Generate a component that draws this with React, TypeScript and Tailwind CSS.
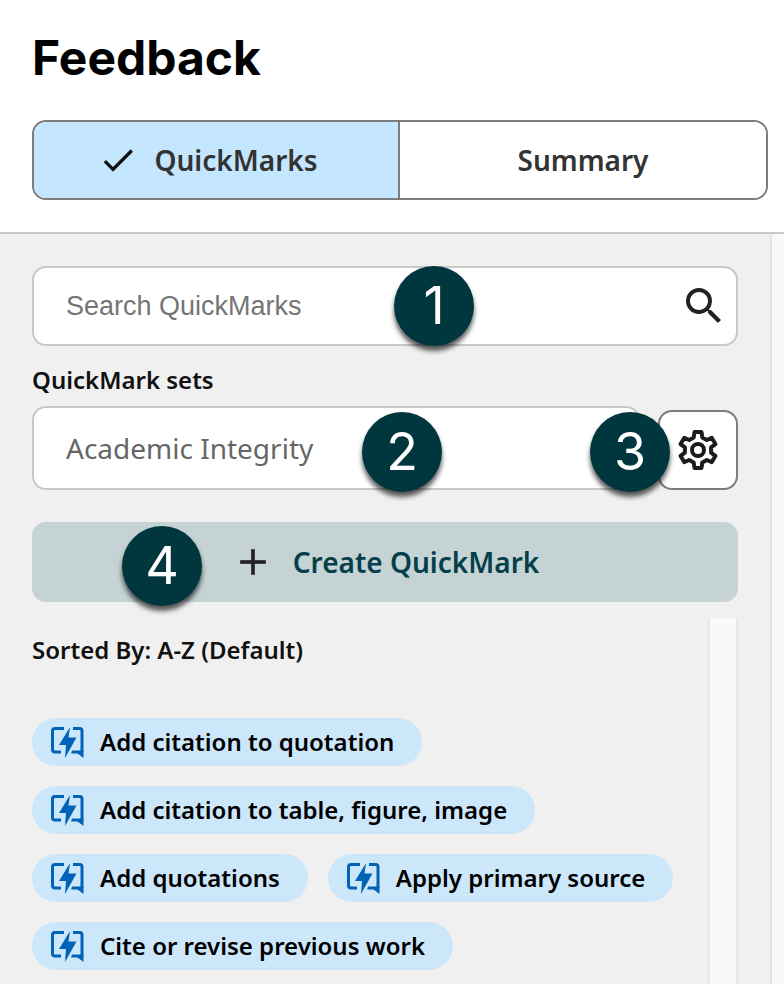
import type { ReactNode } from 'react';
import { Plus } from 'lucide-react';
import { MdCheck, MdSearch } from 'react-icons/md';

const quickMarks = [
  'Add citation to quotation',
  'Add citation to table, figure, image',
  'Add quotations',
  'Apply primary source',
  'Cite or revise previous work',
];

const QuickMarkIcon = () => (
  <svg viewBox="0 0 34 32" className="h-8 w-[34px] shrink-0" fill="none" aria-hidden="true">
    <path d="M14 2.5H5Q2.5 2.5 2.5 5V23.5Q2.5 26 5 26H11" stroke="#0063b8" strokeWidth="3" />
    <path d="M23 2.5H29.5Q32 2.5 32 5V26" stroke="#0063b8" strokeWidth="3" />
    <path d="M22 24.5H33.5V32L27.5 27.5H21Z" fill="#0063b8" />
    <path d="M20 1L18.5 11.5H26.5L15 32L16 19H9Z" fill="#0063b8" />
  </svg>
);

const GearIcon = () => (
  <svg
    viewBox="-20 -20 40 40"
    className="size-10"
    fill="none"
    stroke="#1c1c1c"
    strokeWidth="4"
    strokeLinejoin="round"
    aria-hidden="true"
  >
    <path d="M-4.3 -12.6L-3.5 -18H3.5L4.3 -12.6L8.8 -10L13.8 -12.1L17.4 -5.9L13.1 -2.6V2.6L17.4 5.9L13.8 12.1L8.8 10L4.3 12.6L3.5 18H-3.5L-4.3 12.6L-8.8 10L-13.8 12.1L-17.4 5.9L-13.1 2.6V-2.6L-17.4 -5.9L-13.8 -12.1L-8.8 -10Z" />
    <circle r="6" />
  </svg>
);

const Step = ({ className, children }: { className: string; children: ReactNode }) => (
  <span
    className={`absolute z-10 flex size-20 items-center justify-center rounded-full bg-[#00363e] font-['Inter',sans-serif] text-[52px] leading-none text-white shadow-[0_5px_5px_0_rgba(0,0,0,0.65)] ${className}`}
  >
    {children}
  </span>
);

const App = () => {
  return (
    <div className="flex min-h-screen flex-col bg-white font-['Noto_Sans',sans-serif] text-[#111]">
      <header className="border-b-2 border-[#c8c8c8] pt-8 pr-4 pb-8 pl-8">
        <h1 className="mb-9 font-['Inter',sans-serif] text-[48px] leading-[52px] font-bold text-black">Feedback</h1>
        <div className="grid h-20 grid-cols-2 overflow-hidden rounded-[14px] border-2 border-[#7c7c7c] text-[28px] font-semibold text-[#333]">
          <button
            type="button"
            className="flex items-center justify-center gap-4 border-r-2 border-[#7c7c7c] bg-[#c5e6ff] pr-4"
          >
            <MdCheck className="size-10 text-[#111]" />
            QuickMarks
          </button>
          <button type="button" className="bg-white">
            Summary
          </button>
        </div>
      </header>

      <div className="flex flex-1">
        <main className="flex flex-1 flex-col bg-[#f0f0f0] px-8 pt-8">
          <div className="relative">
            <input
              type="text"
              aria-label="Search QuickMarks"
              placeholder="Search QuickMarks"
              className="block h-20 w-full rounded-[14px] border-2 border-[#c8c8c8] bg-white pr-20 pl-8 font-['Liberation_Sans',sans-serif] text-[27px] placeholder:text-[#757575]"
            />
            <button type="button" aria-label="Search" className="absolute top-4 right-[10px] flex size-12 items-center justify-center">
              <MdSearch className="size-12 text-[#222]" />
            </button>
            <Step className="top-0 left-[362px]">1</Step>
          </div>

          <label htmlFor="quickmark-set" className="mt-4 mb-2 text-[24px] leading-9 font-semibold">
            QuickMark sets
          </label>
          <div className="relative flex items-end gap-[18px]">
            <select
              id="quickmark-set"
              className="h-[84px] min-w-0 flex-1 appearance-none rounded-[14px] border-2 border-[#c8c8c8] bg-white px-8 text-[28px] text-[#666]"
            >
              <option>Academic Integrity</option>
            </select>
            <Step className="top-[6px] left-[330px]">2</Step>
            <div className="relative">
              <button
                type="button"
                aria-label="Manage QuickMark sets"
                className="flex size-20 items-center justify-center rounded-[14px] border-2 border-[#7c7c7c] bg-white"
              >
                <GearIcon />
              </button>
              <Step className="top-[2px] -left-[68px]">3</Step>
            </div>
          </div>

          <div className="relative mt-8">
            <button
              type="button"
              className="flex h-20 w-full items-center justify-center gap-[18px] rounded-[14px] bg-[#c5d3d4] text-[28px] font-semibold text-[#04404a]"
            >
              <Plus className="size-11 text-[#222]" strokeLinecap="butt" />
              Create QuickMark
            </button>
            <Step className="top-1 left-[90px]">4</Step>
          </div>

          <div className="mt-4 flex flex-1">
            <section className="flex-1 pt-3">
              <h2 className="mb-12 text-[24px] leading-10 font-semibold">Sorted By: A-Z (Default)</h2>
              <ul className="flex flex-wrap gap-5">
                {quickMarks.map((mark) => (
                  <li key={mark}>
                    <button
                      type="button"
                      className="flex h-12 items-center gap-4 rounded-full bg-[#cce6fa] pr-7 pl-[18px] text-[24px] font-semibold text-black"
                    >
                      <QuickMarkIcon />
                      {mark}
                    </button>
                  </li>
                ))}
              </ul>
            </section>
            <div className="w-[30px] border-x-2 border-[#e6e6e6] bg-[#f9f9f9]" />
          </div>
        </main>
        <div className="w-[14px] border-l-2 border-[#e4e4e4] bg-[#f9f9f9]" />
      </div>
    </div>
  );
};

export default App;
